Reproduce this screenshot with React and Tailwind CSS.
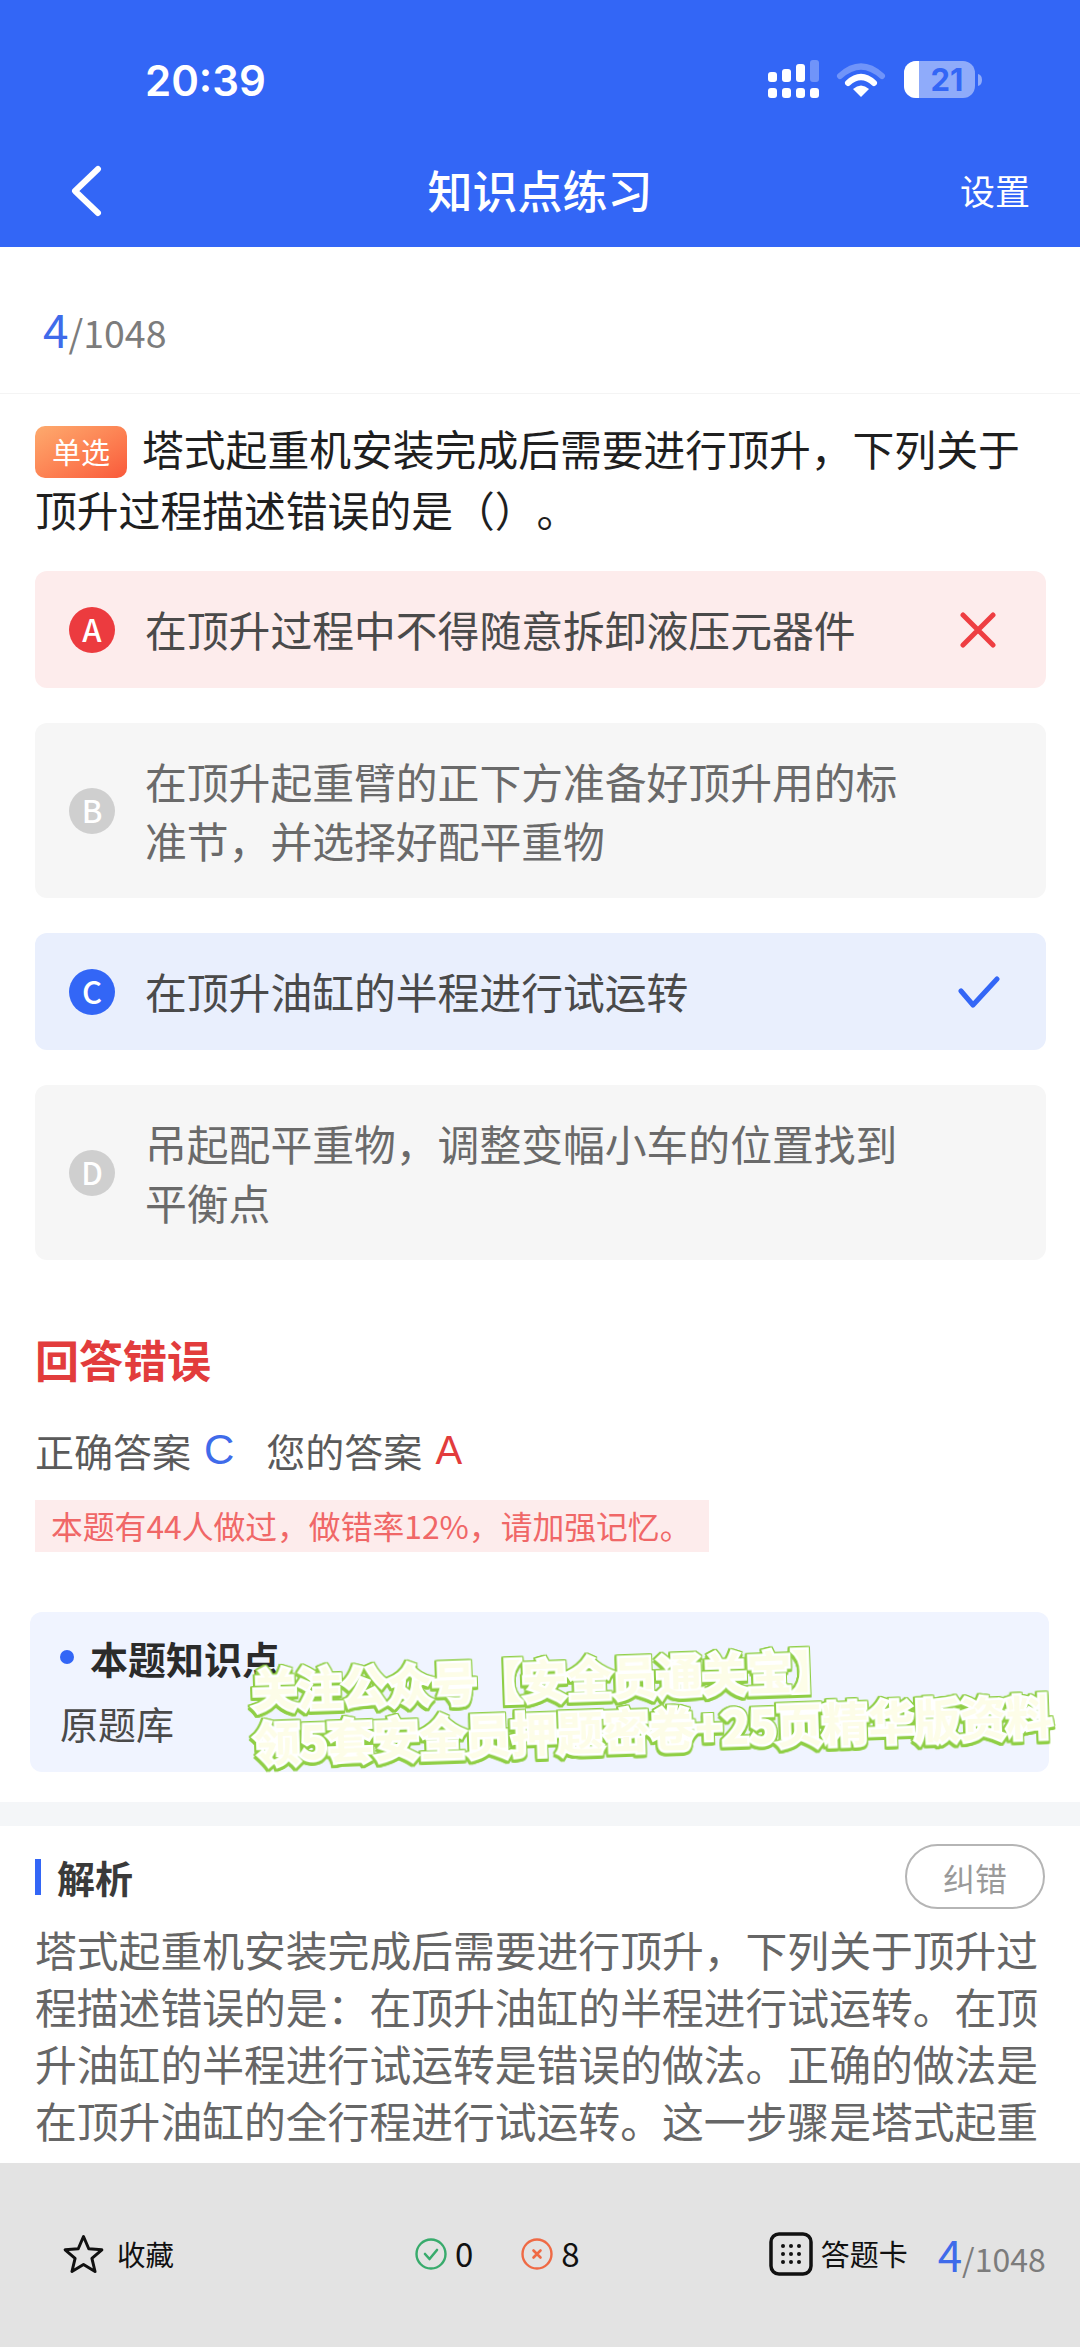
import React from 'react';

const FONT = "font-['Noto_Sans_CJK_SC','Noto_Sans',sans-serif]";

function StatusIcons() {
  return (
    <svg width="216" height="40" viewBox="0 0 216 40" fill="none">
      {/* signal */}
      <rect x="2" y="28" width="9" height="10" rx="3" fill="#fff" />
      <rect x="16" y="28" width="9" height="10" rx="3" fill="#fff" />
      <rect x="30" y="28" width="9" height="10" rx="3" fill="#fff" />
      <rect x="44" y="28" width="9" height="10" rx="3" fill="#fff" />
      <rect x="2" y="12" width="9" height="10" rx="3" fill="#fff" />
      <rect x="16" y="9" width="9" height="13" rx="3" fill="#fff" />
      <rect x="30" y="4" width="9" height="18" rx="3" fill="#fff" />
      <rect x="44" y="0" width="9" height="22" rx="3" fill="#fff" fillOpacity="0.3" />
      {/* wifi */}
      <path d="M74 16 Q95 -3 116 16" stroke="#fff" strokeOpacity="0.3" strokeWidth="6" strokeLinecap="round" />
      <path d="M82 23 Q95 11 108 23" stroke="#fff" strokeWidth="6" strokeLinecap="round" />
      <path d="M95 37 L87 29 Q95 22 103 29 Z" fill="#fff" />
      {/* battery */}
      <rect x="138" y="1" width="71" height="37" rx="12" fill="#fff" fillOpacity="0.45" />
      <path d="M150 1 H153 V38 H150 A12 12 0 0 1 138 26 V13 A12 12 0 0 1 150 1 Z" fill="#fff" />
      <path d="M212 14 Q216 15 216 20 Q216 25 212 26 Z" fill="#fff" fillOpacity="0.45" />
      <text x="181" y="31" textAnchor="middle" fontFamily="Inter" fontWeight="700" fontSize="31" fill="#3366f6">21</text>
    </svg>
  );
}

function Option({ letter, text, tone, mark }) {
  const tones = {
    red: { box: 'bg-[#fdecec]', dot: 'bg-[#ec3b3f]', txt: 'text-[#4a4a4a]' },
    gray: { box: 'bg-[#f6f6f6]', dot: 'bg-[#cfcfcf]', txt: 'text-[#6a6a6a]' },
    blue: { box: 'bg-[#e9effd]', dot: 'bg-[#3366f6]', txt: 'text-[#4a4a4a]' },
  };
  const t = tones[tone];
  return (
    <div className={`flex items-center min-h-[117px] rounded-[12px] pl-[34px] pr-[46px] py-[29px] ${t.box}`}>
      <div className={`flex items-center justify-center w-[46px] h-[46px] rounded-full shrink-0 text-white text-[31px] font-medium ${t.dot}`}>
        {letter}
      </div>
      <div className={`ml-[30px] w-[770px] text-[41.8px] leading-[58.5px] ${t.txt}`}>{text}</div>
      <div className="ml-auto">{mark}</div>
    </div>
  );
}

function Progress({ big, small }) {
  return (
    <span className="text-[#7c7c7c] leading-none">
      <span className={`text-[#3f6bea] ${big}`}>4</span>
      <span className={small}>/1048</span>
    </span>
  );
}

export default function App() {
  return (
    <div className={`relative flex flex-col w-[1080px] h-[2347px] bg-white overflow-hidden [text-spacing-trim:space-all] ${FONT}`}>
      {/* header */}
      <div className="h-[247px] shrink-0 bg-[#3366f6] text-white">
        <div className="flex items-center justify-between h-[160px] pl-[145px] pr-[98px]">
          <span className="font-['Inter'] font-semibold text-[42px]">20:39</span>
          <StatusIcons />
        </div>
        <div className="relative flex items-center justify-center h-[60px]">
          <svg className="absolute left-[68px] top-[5px]" width="36" height="52" viewBox="0 0 36 52" fill="none">
            <path d="M30 4 L7 26 L30 48" stroke="#fff" strokeWidth="6" strokeLinecap="round" strokeLinejoin="round" />
          </svg>
          <span className="text-[45px] font-medium">知识点练习</span>
          <span className="absolute right-[50px] text-[35px]">设置</span>
        </div>
      </div>

      {/* scroll area */}
      <div className="flex-1 overflow-hidden">
        <div className="flex items-end h-[147px] pl-[43px] pb-[42px] border-b border-[#f4f4f4]">
          <Progress big="text-[46px]" small="text-[37.5px]" />
        </div>

        <div className="px-[35px] pt-[24px] text-[41.8px] leading-[61px] text-[#1f1f1f]">
          <span className="inline-flex items-center justify-center align-[2px] w-[92px] h-[52px] mr-[15px] rounded-[10px] bg-gradient-to-br from-[#fdaa6e] to-[#f9583a] text-white text-[29px] leading-none">
            单选
          </span>
          塔式起重机安装完成后需要进行顶升，下列关于顶升过程描述错误的是（）。
        </div>

        <div className="flex flex-col gap-[35px] mx-[35px] mt-[31px] w-[1011px]">
          <Option
            letter="A"
            tone="red"
            text="在顶升过程中不得随意拆卸液压元器件"
            mark={
              <svg width="36" height="36" viewBox="0 0 36 36" fill="none" className="mr-[4px]">
                <path d="M3 3 L33 33 M33 3 L3 33" stroke="#ee3e42" strokeWidth="5" strokeLinecap="round" />
              </svg>
            }
          />
          <Option letter="B" tone="gray" text="在顶升起重臂的正下方准备好顶升用的标准节，并选择好配平重物" />
          <Option
            letter="C"
            tone="blue"
            text="在顶升油缸的半程进行试运转"
            mark={
              <svg width="42" height="32" viewBox="0 0 42 32" fill="none">
                <path d="M3 15 L15 29 L39 3" stroke="#3366f6" strokeWidth="5" strokeLinecap="round" strokeLinejoin="round" />
              </svg>
            }
          />
          <Option letter="D" tone="gray" text="吊起配平重物，调整变幅小车的位置找到平衡点" />
        </div>

        {/* result */}
        <div className="px-[35px] mt-[67px]">
          <div className="text-[44px] leading-[64px] font-bold text-[#e23c3c]">回答错误</div>
          <div className="flex items-center mt-[31px] text-[39px] leading-[56px] text-[#5a5a5a]">
            <span>正确答案</span>
            <span className="ml-[13px] font-['Liberation_Sans'] text-[42px] text-[#3f6bea]">C</span>
            <span className="ml-[32px]">您的答案</span>
            <span className="ml-[13px] font-['Liberation_Sans'] text-[40px] text-[#e23c3c]">A</span>
          </div>
          <div className="flex items-center w-[674px] h-[52px] mt-[22px] pl-[16px] bg-[#fdecec] text-[31.8px] text-[#f06767]">
            本题有44人做过，做错率12%，请加强记忆。
          </div>
        </div>

        {/* knowledge card */}
        <div className="h-[160px] mx-[30px] mt-[60px] w-[1019px] pl-[30px] pt-[16px] rounded-[12px] bg-[#f0f4ff]">
          <div className="flex items-center h-[58px]">
            <span className="w-[14px] h-[14px] rounded-full bg-[#3366f6]" />
            <span className="ml-[16px] text-[38px] font-bold text-[#2b2b2b]">本题知识点</span>
          </div>
          <div className="mt-[8px] text-[38px] leading-[58px] text-[#4a4a4a]">原题库</div>
        </div>

        <div className="h-[24px] mt-[30px] bg-[#f4f6f8]" />

        {/* analysis */}
        <div className="px-[35px] pt-[18px]">
          <div className="flex items-center justify-between h-[65px]">
            <div className="flex items-center">
              <span className="w-[6px] h-[36px] bg-[#3366f6]" />
              <span className="ml-[16px] text-[38px] font-bold text-[#3a3a3a]">解析</span>
            </div>
            <span className="flex items-center justify-center w-[140px] h-[65px] rounded-full border-2 border-[#b5b5b5] text-[32px] text-[#9a9a9a]">
              纠错
            </span>
          </div>
          <p className="mt-[12px] w-[1015px] text-[41.8px] leading-[57px] text-[#666]">
            塔式起重机安装完成后需要进行顶升，下列关于顶升过程描述错误的是：在顶升油缸的半程进行试运转。在顶升油缸的半程进行试运转是错误的做法。正确的做法是在顶升油缸的全行程进行试运转。这一步骤是塔式起重
          </p>
        </div>
      </div>

      {/* bottom bar */}
      <div className="flex items-center h-[184px] shrink-0 pb-[2px] bg-[#e3e3e3] text-[#111]">
        <svg className="ml-[62px]" width="43" height="42" viewBox="0 0 24 24" fill="none">
          <path d="M12 2 L15 9 L22.5 9.6 L16.8 14.5 L18.6 22 L12 18 L5.4 22 L7.2 14.5 L1.5 9.6 L9 9 Z" stroke="#111" strokeWidth="1.7" strokeLinejoin="round" />
        </svg>
        <span className="ml-[12px] text-[28.5px]">收藏</span>

        <svg className="ml-[241px]" width="32" height="32" viewBox="0 0 32 32" fill="none">
          <circle cx="16" cy="16" r="14.5" stroke="#38ab6c" strokeWidth="2.4" />
          <path d="M10 16 L14.5 21 L22 12" stroke="#38ab6c" strokeWidth="2.6" strokeLinecap="round" strokeLinejoin="round" />
        </svg>
        <span className="ml-[8px] text-[33px]">0</span>

        <svg className="ml-[48px]" width="32" height="32" viewBox="0 0 32 32" fill="none">
          <circle cx="16" cy="16" r="14.5" stroke="#ef6a45" strokeWidth="2.4" />
          <path d="M12.5 12.5 L19.5 19.5 M19.5 12.5 L12.5 19.5" stroke="#ef6a45" strokeWidth="2.6" strokeLinecap="round" />
        </svg>
        <span className="ml-[8px] text-[33px]">8</span>

        <svg className="ml-[189px]" width="44" height="44" viewBox="0 0 44 44" fill="none">
          <rect x="2" y="2" width="40" height="40" rx="8" stroke="#111" strokeWidth="3.5" />
          {[14, 22, 30].map((y) =>
            [14, 22, 30].map((x) => <circle key={`${x}-${y}`} cx={x} cy={y} r="2" fill="#111" />)
          )}
        </svg>
        <span className="ml-[8px] text-[29px]">答题卡</span>
        <span className="ml-[30px]">
          <Progress big="text-[44px]" small="text-[32px]" />
        </span>
      </div>

      {/* watermark over the card */}
      <div className="absolute left-[253px] top-[1663px] -rotate-2 origin-left whitespace-nowrap text-[45px] leading-[52px] font-bold text-[#fdfde8] [-webkit-text-stroke:5px_#ffffff] [paint-order:stroke_fill] [filter:drop-shadow(1.5px_0_0_#8fce45)_drop-shadow(-1.5px_0_0_#8fce45)_drop-shadow(0_3px_0_#8fce45)_drop-shadow(0_-1px_0_#8fce45)]">
        <div>关注公众号【安全员通关宝】</div>
        <div className="text-[46px]">领5套安全员押题密卷+25页精华版资料</div>
      </div>
    </div>
  );
}
